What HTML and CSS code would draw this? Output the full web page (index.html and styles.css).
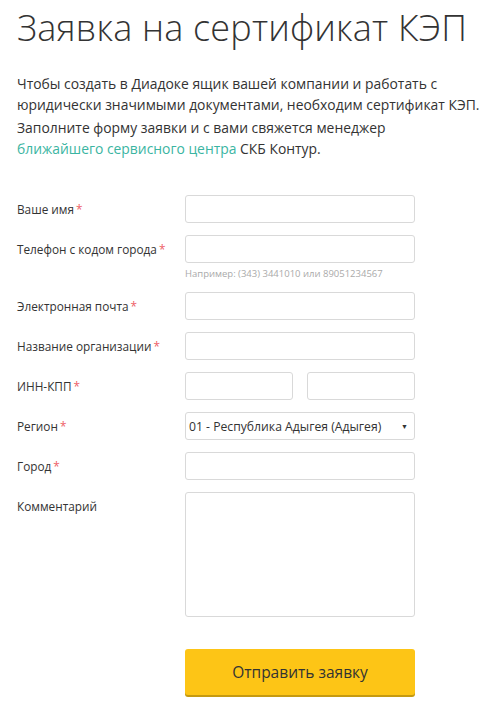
FILE: index.html
```html
<!DOCTYPE html>
<html>
<head>
	<title>Заявка на сертификат КЭП</title>
	<meta charset="utf-8">
	<link rel="stylesheet" href="styles.css">
	<meta name="viewport" content="width=device-width, initial-scale=1">
</head>

<body>

<div id="wrapper">
	<h1 class="title">Заявка на сертификат КЭП</h1>

	<p class="lead">Чтобы создать в Диадоке ящик вашей компании и работать с юридически значимыми документами, необходим сертификат КЭП.</p>
	<p class="lead">Заполните форму заявки и с вами свяжется менеджер<br/><a href="#" class="link">ближайшего сервисного центра</a> СКБ Контур.</p>

	<form class="form">
		<div class="row">
			<label class="lbl" for="name">Ваше имя<span class="req">*</span></label>
			<div class="field"><input class="inp" type="text" id="name"/></div>
		</div>
		<div class="row">
			<label class="lbl" for="phone">Телефон с кодом города<span class="req">*</span></label>
			<div class="field">
				<input class="inp" type="text" id="phone"/>
				<div class="hint">Например: (343) 3441010 или 89051234567</div>
			</div>
		</div>
		<div class="row">
			<label class="lbl" for="email">Электронная почта<span class="req">*</span></label>
			<div class="field"><input class="inp" type="text" id="email"/></div>
		</div>
		<div class="row">
			<label class="lbl" for="org">Название организации<span class="req">*</span></label>
			<div class="field"><input class="inp" type="text" id="org"/></div>
		</div>
		<div class="row">
			<label class="lbl" for="inn">ИНН-КПП<span class="req">*</span></label>
			<div class="field pair">
				<input class="inp" type="text" id="inn"/>
				<input class="inp" type="text" id="kpp"/>
			</div>
		</div>
		<div class="row">
			<label class="lbl" for="region">Регион<span class="req">*</span></label>
			<div class="field">
				<div class="select">
					<span>01 - Республика Адыгея (Адыгея)</span>
					<span class="arrow">&#9660;</span>
				</div>
			</div>
		</div>
		<div class="row">
			<label class="lbl" for="city">Город<span class="req">*</span></label>
			<div class="field"><input class="inp" type="text" id="city"/></div>
		</div>
		<div class="row">
			<label class="lbl" for="comment">Комментарий</label>
			<div class="field"><textarea class="inp area" id="comment"></textarea></div>
		</div>
		<div class="row submit">
			<div class="lbl"></div>
			<div class="field"><button class="btn" type="button">Отправить заявку</button></div>
		</div>
	</form>
</div>

</body>
</html>
```

FILE: styles.css
```css
body {
	margin: 0;
	font-family: "Open Sans", "Noto Sans", sans-serif;
	color: #333;
	background: #fff;
}
#wrapper {
	padding: 0 6px 0 17px;
}
.title {
	font-weight: 300;
	font-size: 36px;
	line-height: 44px;
	margin: 6px 0 23px;
	color: #333;
	letter-spacing: 0.2px;
}
.lead {
	font-size: 13.9px;
	line-height: 21px;
	margin: 0;
}
.lead + .lead {
	margin-top: 2px;
}
.link {
	color: #3bb5a2;
	text-decoration: none;
}

.form {
	margin-top: 36px;
}
.row {
	display: flex;
	margin-bottom: 12px;
}
.lbl {
	width: 168px;
	flex-shrink: 0;
	font-size: 11.8px;
	line-height: 28px;
	color: #333;
}
.req {
	color: #ee5e66;
	margin-left: 2px;
}
.field {
	width: 230px;
}
.inp {
	display: block;
	box-sizing: border-box;
	width: 100%;
	height: 28px;
	border: 1px solid #d9d9d9;
	border-radius: 3px;
	font-family: inherit;
	margin: 0;
}
.hint {
	font-size: 9.5px;
	color: #aaa;
	line-height: 14px;
	margin-top: 4px;
	margin-bottom: -1px;
}
.pair {
	display: flex;
	gap: 14px;
}
.select {
	box-sizing: border-box;
	height: 28px;
	border: 1px solid #d9d9d9;
	border-radius: 3px;
	display: flex;
	justify-content: space-between;
	align-items: center;
	padding: 0 6px 0 3px;
	font-size: 12.2px;
	color: #333;
}
.arrow {
	font-size: 7px;
	color: #333;
}
.area {
	height: 125px;
	resize: none;
}
.submit {
	margin-top: 32px;
}
.btn {
	width: 100%;
	height: 46px;
	border: 0;
	border-radius: 3px;
	background: #fdc516;
	box-shadow: 0 2px 0 #c59a10;
	font-family: inherit;
	font-size: 15.5px;
	color: #333;
	cursor: pointer;
}
```
